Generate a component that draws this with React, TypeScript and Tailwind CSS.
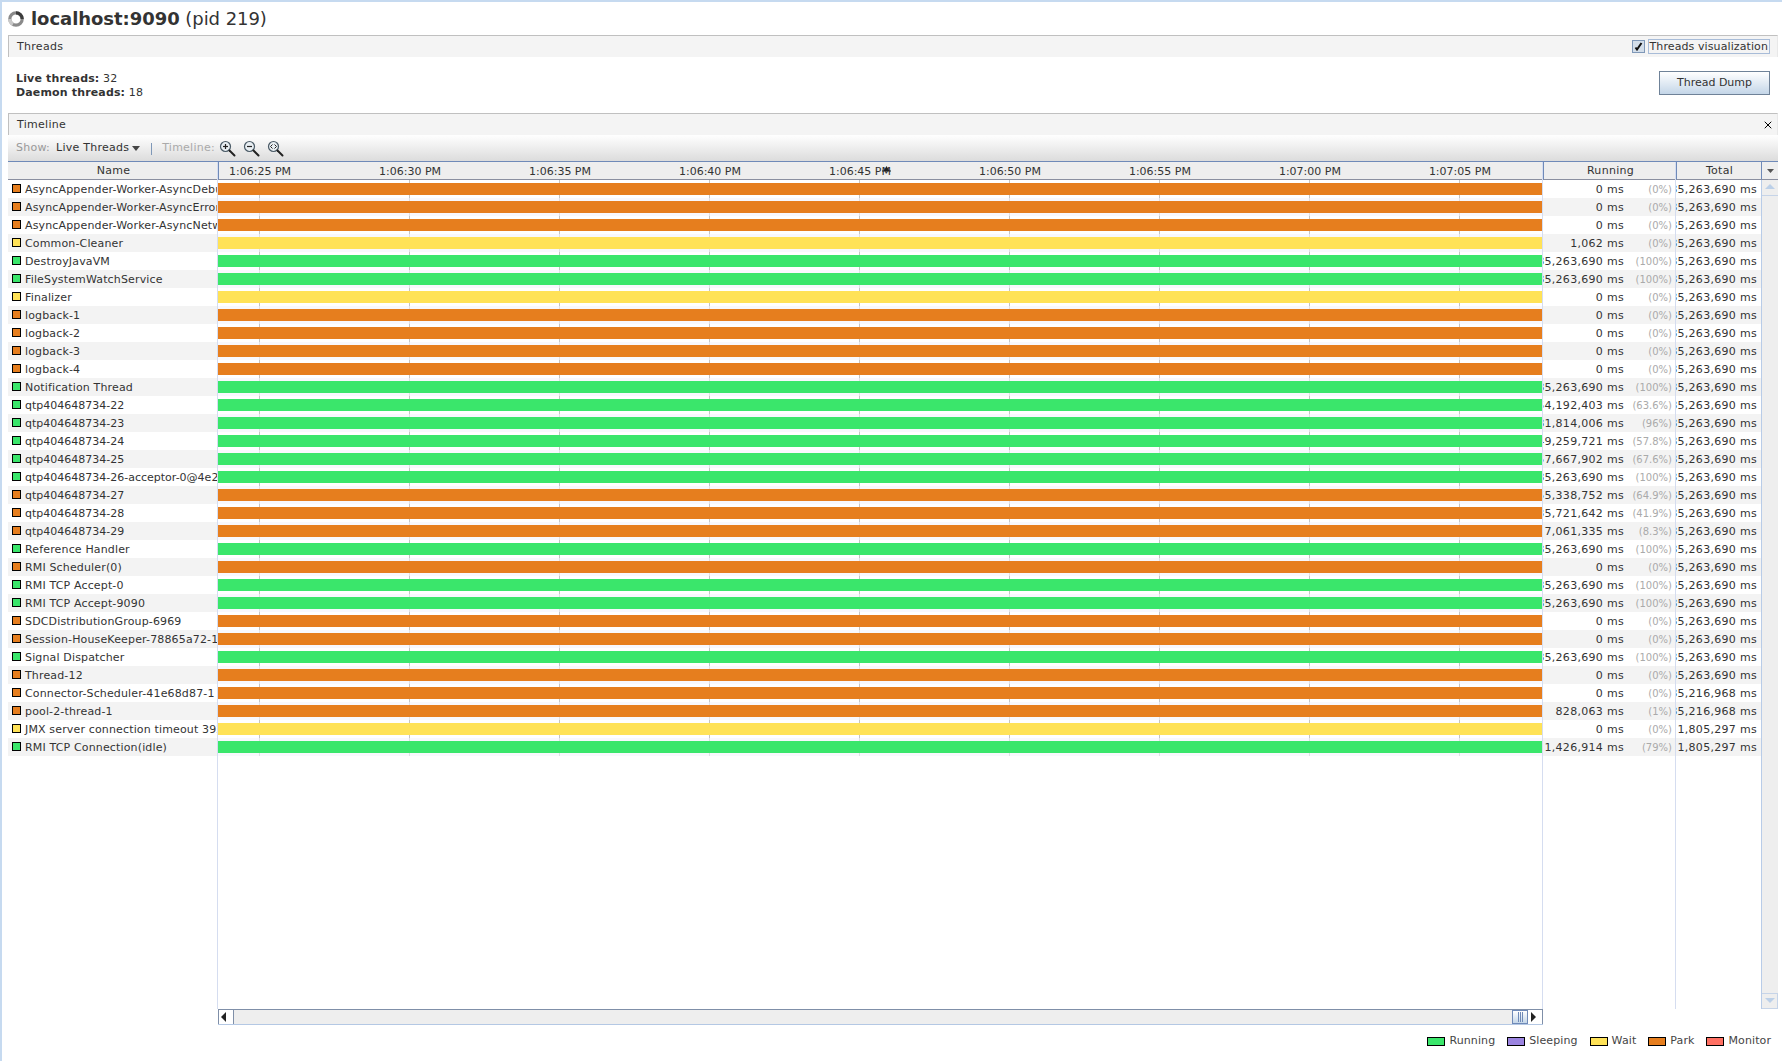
import type { ReactNode } from 'react';
import { X } from 'lucide-react';

type ThreadRow = { name: string; state: 'run' | 'park' | 'wait'; running: string; pct: string; total: string };

const T = '85,263,690 ms';

const rows: ThreadRow[] = [
  { name: 'AsyncAppender-Worker-AsyncDebug', state: 'park', running: '0 ms', pct: '(0%)', total: T },
  { name: 'AsyncAppender-Worker-AsyncError', state: 'park', running: '0 ms', pct: '(0%)', total: T },
  { name: 'AsyncAppender-Worker-AsyncNetwork', state: 'park', running: '0 ms', pct: '(0%)', total: T },
  { name: 'Common-Cleaner', state: 'wait', running: '1,062 ms', pct: '(0%)', total: T },
  { name: 'DestroyJavaVM', state: 'run', running: T, pct: '(100%)', total: T },
  { name: 'FileSystemWatchService', state: 'run', running: T, pct: '(100%)', total: T },
  { name: 'Finalizer', state: 'wait', running: '0 ms', pct: '(0%)', total: T },
  { name: 'logback-1', state: 'park', running: '0 ms', pct: '(0%)', total: T },
  { name: 'logback-2', state: 'park', running: '0 ms', pct: '(0%)', total: T },
  { name: 'logback-3', state: 'park', running: '0 ms', pct: '(0%)', total: T },
  { name: 'logback-4', state: 'park', running: '0 ms', pct: '(0%)', total: T },
  { name: 'Notification Thread', state: 'run', running: T, pct: '(100%)', total: T },
  { name: 'qtp404648734-22', state: 'run', running: '54,192,403 ms', pct: '(63.6%)', total: T },
  { name: 'qtp404648734-23', state: 'run', running: '81,814,006 ms', pct: '(96%)', total: T },
  { name: 'qtp404648734-24', state: 'run', running: '49,259,721 ms', pct: '(57.8%)', total: T },
  { name: 'qtp404648734-25', state: 'run', running: '57,667,902 ms', pct: '(67.6%)', total: T },
  { name: 'qtp404648734-26-acceptor-0@4e2a', state: 'run', running: T, pct: '(100%)', total: T },
  { name: 'qtp404648734-27', state: 'park', running: '55,338,752 ms', pct: '(64.9%)', total: T },
  { name: 'qtp404648734-28', state: 'park', running: '35,721,642 ms', pct: '(41.9%)', total: T },
  { name: 'qtp404648734-29', state: 'park', running: '7,061,335 ms', pct: '(8.3%)', total: T },
  { name: 'Reference Handler', state: 'run', running: T, pct: '(100%)', total: T },
  { name: 'RMI Scheduler(0)', state: 'park', running: '0 ms', pct: '(0%)', total: T },
  { name: 'RMI TCP Accept-0', state: 'run', running: T, pct: '(100%)', total: T },
  { name: 'RMI TCP Accept-9090', state: 'run', running: T, pct: '(100%)', total: T },
  { name: 'SDCDistributionGroup-6969', state: 'park', running: '0 ms', pct: '(0%)', total: T },
  { name: 'Session-HouseKeeper-78865a72-1', state: 'park', running: '0 ms', pct: '(0%)', total: T },
  { name: 'Signal Dispatcher', state: 'run', running: T, pct: '(100%)', total: T },
  { name: 'Thread-12', state: 'park', running: '0 ms', pct: '(0%)', total: T },
  { name: 'Connector-Scheduler-41e68d87-1', state: 'park', running: '0 ms', pct: '(0%)', total: '85,216,968 ms' },
  { name: 'pool-2-thread-1', state: 'park', running: '828,063 ms', pct: '(1%)', total: '85,216,968 ms' },
  { name: 'JMX server connection timeout 392', state: 'wait', running: '0 ms', pct: '(0%)', total: '1,805,297 ms' },
  { name: 'RMI TCP Connection(idle)', state: 'run', running: '1,426,914 ms', pct: '(79%)', total: '1,805,297 ms' },
];

const stateColor = { run: 'bg-[#3ae66b]', park: 'bg-[#e67e1e]', wait: 'bg-[#ffe257]' };

const ticks = ['1:06:25 PM', '1:06:30 PM', '1:06:35 PM', '1:06:40 PM', '1:06:45 PM', '1:06:50 PM', '1:06:55 PM', '1:07:00 PM', '1:07:05 PM'];

const legend = [
  { label: 'Running', color: 'bg-[#3ae66b]' },
  { label: 'Sleeping', color: 'bg-[#9b84e0]' },
  { label: 'Wait', color: 'bg-[#ffe257]' },
  { label: 'Park', color: 'bg-[#e67e1e]' },
  { label: 'Monitor', color: 'bg-[#ff7063]' },
];

function Spinner() {
  return (
    <svg width="16" height="16" viewBox="0 0 16 16" className="shrink-0">
      <circle cx="8" cy="8" r="6.2" fill="none" stroke="#8a8a8a" strokeWidth="3.2" />
      <path d="M8 1.8a6.2 6.2 0 0 1 6.2 6.2" fill="none" stroke="#3c3c3c" strokeWidth="3.2" />
      <path d="M1.8 8a6.2 6.2 0 0 0 3.1 5.4" fill="none" stroke="#c8c8c8" strokeWidth="3.2" />
    </svg>
  );
}

function Magnifier({ kind }: { kind: 'in' | 'out' | 'fit' }) {
  return (
    <svg width="17" height="17" viewBox="0 0 17 17" className="shrink-0">
      <circle cx="6.5" cy="6.5" r="5" fill="#e8eef2" stroke="#4a5a66" strokeWidth="1.2" />
      <path d="M10.5 10.5l5 5" stroke="#222" strokeWidth="2" strokeLinecap="round" />
      {kind !== 'fit' && <path d="M4 6.5h5" stroke="#222" strokeWidth="1.2" />}
      {kind === 'in' && <path d="M6.5 4v5" stroke="#222" strokeWidth="1.2" />}
      {kind === 'fit' && <path d="M5.5 4.5l-2 2 2 2M7.5 4.5l2 2-2 2" fill="none" stroke="#222" strokeWidth="1" />}
    </svg>
  );
}

function SectionBar({ title, children }: { title: string; children?: ReactNode }) {
  return (
    <div className="flex h-[22px] shrink-0 items-center justify-between border-t border-l border-r border-[#c0c0c0] border-r-[#e8e8e8] bg-[#f4f4f4] pl-2 pr-[7px] text-[#333]">
      <span className="pt-[1px] tracking-[0.3px]">{title}</span>
      {children}
    </div>
  );
}

function Arrow({ dir, light }: { dir: 'left' | 'right' | 'up' | 'down'; light?: boolean }) {
  const d = { left: 'M6 1v10L1 6z', right: 'M2 1v10l5-5z', up: 'M1 7h10L6 2z', down: 'M1 3h10L6 8z' }[dir];
  return (
    <svg width="12" height="12" viewBox="0 0 12 12">
      <path d={d} fill={light ? '#bcd0e8' : '#222'} />
    </svg>
  );
}

export default function App() {
  return (
    <div className="flex h-[1061px] w-[1782px] flex-col overflow-hidden border-t-2 border-l-2 border-[#c6daf0] bg-white pl-[6px] pr-[4px] font-['DejaVu_Sans',sans-serif] text-[11px] text-[#333]">
      {/* Title */}
      <div className="flex h-[33px] shrink-0 items-center gap-[7px] text-[18px] text-[#333]">
        <Spinner />
        <span className="tracking-[-0.05px]">
          <b className="font-bold">localhost:9090</b> (pid 219)
        </span>
      </div>

      {/* Threads */}
      <SectionBar title="Threads">
        <label className="flex items-center gap-[3px]">
          <span className="flex h-[13px] w-[13px] items-center justify-center border border-[#7f98b8] bg-[#d3deea]">
            <svg width="9" height="9" viewBox="0 0 9 9">
              <path d="M1.5 5.5l1.5 2L7.5 1" fill="none" stroke="#111" strokeWidth="2" />
            </svg>
          </span>
          <span className="border border-[#a8bcd8] px-px leading-[13px] tracking-[0.1px]">Threads visualization</span>
        </label>
      </SectionBar>
      <div className="flex h-[56px] shrink-0 items-center justify-between pl-2 pr-[8px] pt-[1px]">
        <div className="leading-[14px] tracking-[0.15px]">
          <div><b className="font-bold">Live threads:</b> 32</div>
          <div><b className="font-bold">Daemon threads:</b> 18</div>
        </div>
        <button className="mt-[-5px] flex h-[24px] w-[111px] items-center justify-center border border-[#6f8298] bg-gradient-to-b from-white to-[#c4d6e8] text-[#333]">
          Thread Dump
        </button>
      </div>

      {/* Timeline */}
      <SectionBar title="Timeline">
        <X size={12} strokeWidth={2} className="mr-[-4px] text-black" />
      </SectionBar>
      <div className="flex h-[26px] shrink-0 items-center bg-gradient-to-b from-white to-[#dcdcdc] pl-[8px] pt-[1px] tracking-[0.25px]">
        <span className="text-[#999]">Show:</span>
        <span className="ml-[6px]">Live Threads</span>
        <svg width="8" height="5" viewBox="0 0 8 5" className="ml-[3px]">
          <path d="M0 0h8L4 5z" fill="#444" />
        </svg>
        <span className="ml-[11px] h-[12px] w-px bg-[#7f98b8]" />
        <span className="ml-[10px] text-[#aaa]">Timeline:</span>
        <span className="ml-[4px] flex gap-[7px]">
          <Magnifier kind="in" />
          <Magnifier kind="out" />
          <Magnifier kind="fit" />
        </span>
      </div>

      {/* Table */}
      <div className="flex h-[848px] shrink-0 border-t border-[#6f8ab8]">
        {/* Name */}
        <div className="flex w-[210px] shrink-0 flex-col border-r border-[#d5ddf0]">
          <div className="flex h-[18px] items-center justify-center border-b border-[#8a8fa0] bg-[#eeeeee] pl-[2px] pt-[2px] tracking-[0.3px]">Name</div>
          {rows.map((r, i) => (
            <div key={r.name} className={i % 2 ? 'flex h-[18px] items-start overflow-hidden bg-[#f3f3f3] pl-1' : 'flex h-[18px] items-start overflow-hidden bg-white pl-1'}>
              <span className={'mr-[4px] mt-[4px] h-[9px] w-[9px] shrink-0 border border-black ' + stateColor[r.state]} />
              <span className={r.name.startsWith('qtp') ? 'whitespace-nowrap leading-[19px]' : 'whitespace-nowrap leading-[19px] tracking-[0.15px]'}>{r.name}</span>
            </div>
          ))}
        </div>

        {/* Timeline column */}
        <div className="flex w-[1325px] shrink-0 flex-col border-r border-[#d5ddf0]">
          <div className="relative flex h-[18px] shrink-0 border-b border-[#8a8fa0] border-l border-l-[#6f8ab8] bg-[#eeeeee]">
            <div className="ml-[-35px] flex gap-[86.8px] pl-[45px]">
              {ticks.map((t) => (
                <span key={t} className="w-[63.2px] whitespace-nowrap leading-[19px]">{t}</span>
              ))}
            </div>
            <svg width="9" height="8" viewBox="0 0 9 8" className="absolute left-[663px] top-[4px]">
              <path d="M0 5h9" stroke="#222" strokeWidth="1" />
              <path d="M4.5 0l3 5h-6z" fill="#222" />
            </svg>
          </div>
          <div className="relative flex-1">
            {rows.map((r, i) => (
              <div key={r.name} className={i % 2 ? 'relative z-10 flex h-[18px] items-start bg-[#f3f3fc]/60 pt-[3px]' : 'relative z-10 flex h-[18px] items-start pt-[3px]'}>
                <div className={'h-[12px] w-full ' + stateColor[r.state]} />
              </div>
            ))}
            {/* tick lines */}
            {[41, 191, 341, 491, 641, 791, 941, 1091, 1241].map((x) => (
              <div key={x} className="absolute top-0 h-[576px] w-px bg-[#c4c4c4]" style={{ left: x }} />
            ))}
          </div>
        </div>

        {/* Running */}
        <div className="flex w-[133px] shrink-0 flex-col border-r border-[#d5ddf0]">
          <div className="flex h-[18px] items-center justify-center border-b border-l border-[#8a8fa0] border-l-[#6f8ab8] bg-[#eeeeee] pl-[2px] pt-[2px] tracking-[0.3px]">Running</div>
          {rows.map((r, i) => (
            <div key={r.name} className={i % 2 ? 'flex h-[18px] items-start justify-end overflow-hidden bg-[#f3f3f3] pr-[3px]' : 'flex h-[18px] items-start justify-end overflow-hidden bg-white pr-[3px]'}>
              <span className="whitespace-nowrap leading-[19px] tracking-[0.3px]">{r.running}</span>
              <span className="w-[48px] shrink-0 whitespace-nowrap text-right text-[10px] leading-[19px] text-[#aaa]">{r.pct}</span>
            </div>
          ))}
        </div>

        {/* Total */}
        <div className="flex w-[85px] shrink-0 flex-col">
          <div className="flex h-[18px] items-center justify-center border-b border-l border-[#8a8fa0] border-l-[#6f8ab8] bg-[#eeeeee] pl-[1px] pt-[2px] tracking-[0.3px]">Total</div>
          {rows.map((r, i) => (
            <div key={r.name} className={i % 2 ? 'flex h-[18px] items-start justify-end overflow-hidden bg-[#f3f3f3] pr-[4px]' : 'flex h-[18px] items-start justify-end overflow-hidden bg-white pr-[4px]'}>
              <span className="whitespace-nowrap leading-[19px] tracking-[0.3px]">{r.total}</span>
            </div>
          ))}
        </div>

        {/* Vertical scrollbar */}
        <div className="flex w-[17px] shrink-0 flex-col bg-[#eeeeee]">
          <div className="flex h-[18px] items-center justify-center border-b border-l border-[#8a8fa0] border-l-[#6f8ab8] bg-[#eeeeee]">
            <svg width="7" height="4" viewBox="0 0 7 4">
              <path d="M0 0h7L3.5 4z" fill="#555" />
            </svg>
          </div>
          <div className="flex flex-1 flex-col border-l border-[#b8cce8]">
            <div className="flex h-[16px] items-center justify-center border-b border-[#c6d4e8]">
              <Arrow dir="up" light />
            </div>
            <div className="flex-1" />
            <div className="flex h-[16px] items-center justify-center border-y border-r border-[#c6d4e8]">
              <Arrow dir="down" light />
            </div>
          </div>
        </div>
      </div>

      {/* Horizontal scrollbar */}
      <div className="flex h-[16px] shrink-0 pl-[210px]">
        <div className="flex h-[16px] w-[1325px] border-t border-b border-[#7f8fa8] border-b-[#b4c8e4] bg-[#eeeeee]">
          <div className="flex w-[16px] items-center justify-center border-l border-r border-[#7f8fa8] bg-white">
            <Arrow dir="left" />
          </div>
          <div className="flex-1" />
          <div className="flex w-[16px] items-center justify-center gap-[1px] border border-[#6f8ab8] bg-gradient-to-b from-white to-[#c4d6e8]">
            <span className="h-[10px] w-px bg-[#6f8ab8]" />
            <span className="h-[10px] w-px bg-[#6f8ab8]" />
            <span className="h-[10px] w-px bg-[#6f8ab8]" />
          </div>
          <div className="flex w-[15px] items-center justify-center border-r border-[#7f8fa8] bg-white">
            <Arrow dir="right" />
          </div>
        </div>
      </div>

      {/* Legend */}
      <div className="flex h-[32px] shrink-0 items-center justify-end pr-[7px] tracking-[0.1px] text-[#444]">
        {legend.map((l) => (
          <span key={l.label} className="ml-[12px] flex items-center gap-[4px]">
            <span className={'h-[9px] w-[18px] border border-black ' + l.color} />
            {l.label}
          </span>
        ))}
      </div>
    </div>
  );
}
